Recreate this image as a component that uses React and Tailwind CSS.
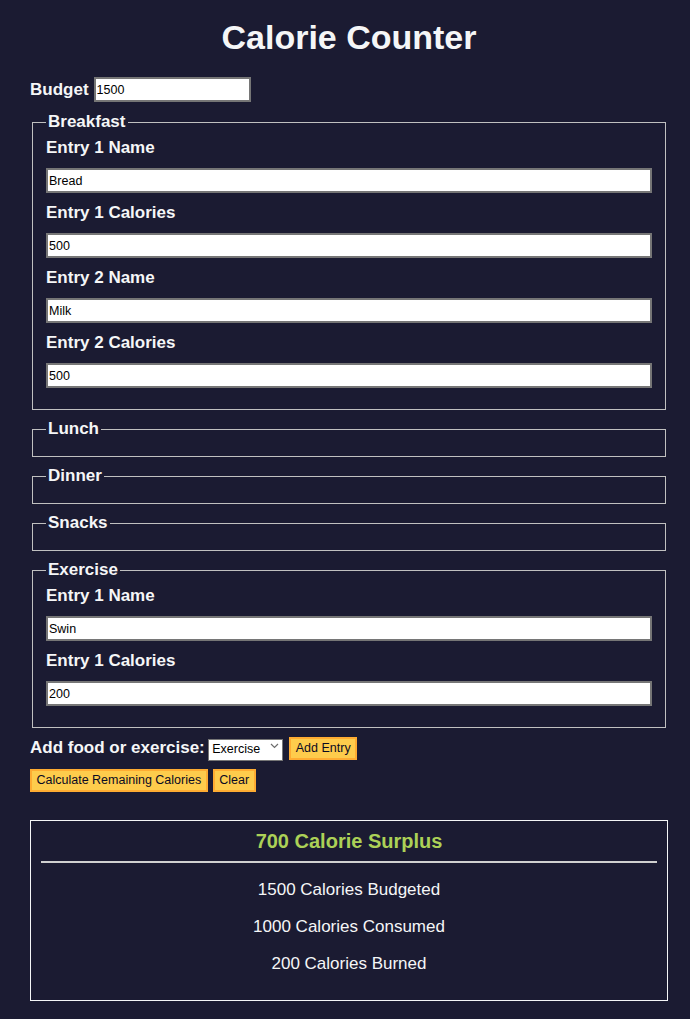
import React from 'react';

const entries = {
  breakfast: [
    { name: 'Bread', calories: '500' },
    { name: 'Milk', calories: '500' },
  ],
  exercise: [{ name: 'Swin', calories: '200' }],
};

const Entry = ({ index, name, calories, first }) => (
  <div className={first ? '' : 'mt-[10px]'}>
    <label className="block font-bold text-[17px] leading-[20px] mb-[10px]">Entry {index} Name</label>
    <input
      type="text"
      defaultValue={name}
      className="block w-full h-[25px] bg-white text-black border-2 border-[#767676] pl-[1px] text-[12.5px] outline-none"
    />
    <label className="block font-bold text-[17px] leading-[20px] mt-[10px] mb-[10px]">Entry {index} Calories</label>
    <input
      type="number"
      defaultValue={calories}
      className="block w-full h-[25px] bg-white text-black border-2 border-[#767676] pl-[1px] text-[12.5px] outline-none [appearance:textfield]"
    />
  </div>
);

const Section = ({ title, items, first }) => (
  <fieldset className={`${first ? 'mt-[10px]' : 'mt-[9px]'} mx-[2px] px-[13px] pt-[6px] pb-[11px] border border-[#c0c0c0]`}>
    <legend className="px-[2px] font-bold text-[17px] leading-[20px]">{title}</legend>
    {items && items.length > 0 && (
      <div className="pb-[10px]">
        {items.map((e, i) => (
          <Entry key={i} index={i + 1} name={e.name} calories={e.calories} first={i === 0} />
        ))}
      </div>
    )}
  </fieldset>
);

const Button = ({ children, className = '' }) => (
  <button className={`h-[23px] px-[4.5px] bg-[#fecc4c] border-2 border-[#feac32] text-[#0a0a23] text-[12.5px] leading-none ${className}`}>
    {children}
  </button>
);

export default function App() {
  return (
    <div className="min-h-screen bg-[#1b1b32] text-[#f5f6f7] font-['Liberation_Sans',Arial,sans-serif] text-[17px] overflow-hidden">
      <div className="ml-[30px] w-[638px] pt-[18px] pb-[19px]">
        <h1 className="text-center font-bold text-[34px] leading-[39px]">Calorie Counter</h1>

        {/* budget */}
        <div className="mt-[20px] flex items-center h-[25px]">
          <label className="font-bold leading-[20px]">Budget</label>
          <input
            type="number"
            defaultValue="1500"
            className="ml-[5px] w-[157px] h-[25px] bg-white text-black border-2 border-[#767676] pl-[1px] text-[12.5px] outline-none [appearance:textfield]"
          />
        </div>

        <Section title="Breakfast" items={entries.breakfast} first />
        <Section title="Lunch" />
        <Section title="Dinner" />
        <Section title="Snacks" />
        <Section title="Exercise" items={entries.exercise} />

        {/* add entry */}
        <div className="mt-[9px] flex items-center h-[22px]">
          <label className="font-bold leading-[20px]">Add food or exercise:</label>
          <div className="relative ml-[3.5px]">
            <select
              defaultValue="exercise"
              className="appearance-none w-[75px] h-[22px] bg-white text-black border border-[#767676] pl-[3px] text-[12.5px] outline-none"
            >
              <option value="breakfast">Breakfast</option>
              <option value="lunch">Lunch</option>
              <option value="dinner">Dinner</option>
              <option value="snacks">Snacks</option>
              <option value="exercise">Exercise</option>
            </select>
            <svg className="absolute right-[4px] top-[8px] w-[9px] h-[6px] pointer-events-none" viewBox="0 0 9 6" fill="none">
              <path d="M1 1l3.5 3.5L8 1" stroke="#6d6d6d" strokeWidth="1.2" />
            </svg>
          </div>
          <Button className="ml-[6px] h-[22px]">Add Entry</Button>
        </div>

        <div className="mt-[10px] flex items-center">
          <Button>Calculate Remaining Calories</Button>
          <Button className="ml-[5px]">Clear</Button>
        </div>

        {/* output */}
        <div className="mt-[28px] border border-[#f5f6f7] p-[9px] text-center">
          <div className="font-bold text-[20px] leading-[23px] text-[#acd157]">700 Calorie Surplus</div>
          <hr className="mt-[8px] mx-[1px] border-t-2 border-[#d0d0d0]" />
          <p className="mt-[17px] leading-[20px]">1500 Calories Budgeted</p>
          <p className="mt-[17px] leading-[20px]">1000 Calories Consumed</p>
          <p className="mt-[17px] mb-[17px] leading-[20px]">200 Calories Burned</p>
        </div>
      </div>
    </div>
  );
}
